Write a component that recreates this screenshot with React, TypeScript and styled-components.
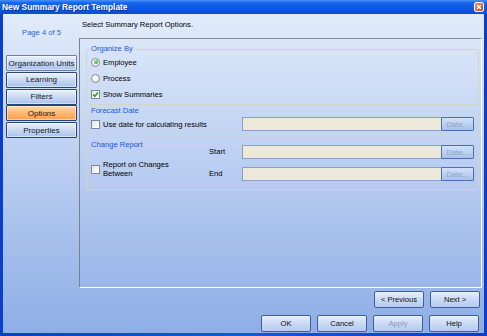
import React from 'react';
import styled, { createGlobalStyle } from 'styled-components';

const GlobalStyle = createGlobalStyle`
  html, body {
    margin: 0;
    padding: 0;
    background: #ffffff;
  }
  body {
    font-family: 'Liberation Sans', Arial, sans-serif;
  }
`;

const Window = styled.div`
  width: 487px;
  height: 336px;
  display: flex;
  flex-direction: column;
  box-sizing: border-box;
  background: linear-gradient(to right, #0a3fc8, #1656e0 50%, #0a3fc8);
  font-family: 'Liberation Sans', Arial, sans-serif;
  font-size: 7.6px;
  color: #000;
  overflow: hidden;
`;

const TitleBar = styled.div`
  height: 14px;
  flex: none;
  display: flex;
  align-items: center;
  justify-content: space-between;
  padding: 0 3px 0 2px;
  background: linear-gradient(#4b93f8 0%, #1665ec 20%, #0a58e4 60%, #0a4ed8 100%);
`;

const Title = styled.span`
  color: #ffffff;
  font-weight: bold;
  font-size: 8.4px;
  line-height: 14px;
  text-shadow: 1px 1px 0 #0a2f9a;
`;

const CloseButton = styled.div`
  width: 10px;
  height: 10px;
  box-sizing: border-box;
  border: 1px solid #ffffff;
  border-radius: 2px;
  background: linear-gradient(135deg, #f08a6c, #d8431f);
  display: flex;
  align-items: center;
  justify-content: center;
`;

const Body = styled.div`
  flex: 1;
  margin: 0 3px 3px 3px;
  display: grid;
  grid-template-columns: 76px 1fr;
  background: linear-gradient(#e1ebfa, #8eaee6);
`;

const Sidebar = styled.div`
  display: flex;
  flex-direction: column;
  padding: 14px 2px 0 3px;
`;

const PageLabel = styled.div`
  height: 10px;
  line-height: 10px;
  text-align: center;
  color: #2a64cc;
  margin-bottom: 17px;
`;

const NavList = styled.div`
  display: flex;
  flex-direction: column;
  gap: 0.75px;
`;

const NavButton = styled.div<{ active?: boolean; focused?: boolean }>`
  height: 16px;
  box-sizing: border-box;
  display: flex;
  align-items: center;
  justify-content: center;
  font-size: 8px;
  color: #1a1a1a;
  border: 1px solid ${({ focused }) => (focused ? '#6f7f9c' : '#26457f')};
  border-radius: 1px;
  background: ${({ active }) =>
    active
      ? 'linear-gradient(#ffdcab, #ffb56e 55%, #ff9c46)'
      : 'linear-gradient(#eaf1fc, #c8d9f4 50%, #a9c2ec)'};
  box-shadow: inset 0 0 0 1px
    ${({ active }) => (active ? 'rgba(255,240,220,0.6)' : 'rgba(255,255,255,0.5)')};
`;

const Main = styled.div`
  display: flex;
  flex-direction: column;
  min-width: 0;
`;

const Header = styled.div`
  height: 24px;
  box-sizing: border-box;
  padding: 6px 0 0 3px;
  line-height: 10px;
`;

const Panel = styled.div`
  height: 250px;
  box-sizing: border-box;
  margin-right: 2px;
  border-left: 1px solid #7d8088;
  border-top: 1px solid #8a8c92;
  border-right: 1px solid #ffffff;
  border-bottom: 1px solid #ffffff;
  padding: 5px 2px 0 6px;
  display: flex;
  flex-direction: column;
`;

const Group = styled.fieldset<{ gapTop?: number; padBottom?: number }>`
  margin: ${({ gapTop }) => gapTop ?? 0}px 0 0 0;
  padding: 0 0 ${({ padBottom }) => padBottom ?? 2}px 4px;
  border: 1px solid #d3d5c9;
  border-radius: 3px;
  min-width: 0;
`;

const Legend = styled.legend`
  padding: 0 1px;
  margin-left: -1px;
  line-height: 10px;
  color: #1a56d6;
`;

const OptionRow = styled.div`
  height: 16px;
  display: flex;
  align-items: center;
  gap: 3px;
`;

const RadioCircle = styled.span<{ checked?: boolean }>`
  width: 9px;
  height: 9px;
  box-sizing: border-box;
  border-radius: 50%;
  border: 1px solid #7f8a98;
  background: radial-gradient(circle at 35% 35%, #ffffff, #e4e4de);
  display: flex;
  align-items: center;
  justify-content: center;
  flex: none;
  &::after {
    content: '';
    display: ${({ checked }) => (checked ? 'block' : 'none')};
    width: 4px;
    height: 4px;
    border-radius: 50%;
    background: radial-gradient(circle at 35% 35%, #7ee07e, #21a121);
  }
`;

const CheckBox = styled.span`
  width: 9px;
  height: 9px;
  box-sizing: border-box;
  border: 1px solid #7d8899;
  background: linear-gradient(135deg, #e6e6df, #ffffff);
  display: flex;
  align-items: center;
  justify-content: center;
  flex: none;
`;

const FieldGrid = styled.div<{ shiftUp?: number }>`
  display: grid;
  grid-template-columns: 118px 33px 200px 32px;
  grid-auto-rows: 16px;
  row-gap: 6px;
  align-items: center;
  margin-top: ${({ shiftUp }) => (shiftUp ? -shiftUp : 0)}px;
`;

const SideLabel = styled.div`
  line-height: 10px;
`;

const CheckCell = styled.div<{ span?: number }>`
  grid-column: 1 / span ${({ span }) => span ?? 1};
  display: flex;
  align-items: center;
  gap: 3px;
`;

const StackCell = styled(CheckCell)`
  grid-row: 1 / span 2;
  align-self: end;
  margin-bottom: 4px;
`;

const WrapLabel = styled.span`
  max-width: 76px;
  line-height: 9px;
`;

const DateField = styled.div`
  height: 14px;
  box-sizing: border-box;
  border: 1px solid #8aa0c3;
  background: #ece9da;
`;

const DateButton = styled.div`
  height: 14px;
  box-sizing: border-box;
  margin-left: -1px;
  border: 1px solid #4a70ae;
  border-radius: 1px;
  background: linear-gradient(#d3e1f7, #a8c1ea);
  color: #8da2c6;
  display: flex;
  align-items: center;
  justify-content: center;
`;

const ButtonRow = styled.div<{ top: number; right: number }>`
  display: flex;
  justify-content: flex-end;
  gap: 6px;
  margin-top: ${({ top }) => top}px;
  padding-right: ${({ right }) => right}px;
`;

const DialogButton = styled.div<{ disabled?: boolean }>`
  width: 50px;
  height: 17px;
  box-sizing: border-box;
  border: 1px solid #3d5f9e;
  border-radius: 2px;
  background: linear-gradient(#e8effc, #c9daf5 50%, #b6cbef);
  color: ${({ disabled }) => (disabled ? '#8c9dbb' : '#111')};
  display: flex;
  align-items: center;
  justify-content: center;
`;

const Check = () => (
  <svg width="7" height="7" viewBox="0 0 7 7">
    <polyline points="1,3.5 2.8,5.3 6,1.6" fill="none" stroke="#21a121" strokeWidth="1.5" />
  </svg>
);

const CloseX = () => (
  <svg width="6" height="6" viewBox="0 0 6 6">
    <path d="M1 1 L5 5 M5 1 L1 5" stroke="#ffffff" strokeWidth="1.4" />
  </svg>
);

const navItems = ['Organization Units', 'Learning', 'Filters', 'Options', 'Properties'];

export default function App() {
  return (
    <>
      <GlobalStyle />
      <Window>
        <TitleBar>
          <Title>New Summary Report Template</Title>
          <CloseButton>
            <CloseX />
          </CloseButton>
        </TitleBar>
        <Body>
          <Sidebar>
            <PageLabel>Page 4 of 5</PageLabel>
            <NavList>
              {navItems.map((item) => (
                <NavButton key={item} active={item === 'Options'} focused={item === 'Organization Units'}>
                  {item}
                </NavButton>
              ))}
            </NavList>
          </Sidebar>
          <Main>
            <Header>Select Summary Report Options.</Header>
            <Panel>
              <Group>
                <Legend>Organize By</Legend>
                <OptionRow>
                  <RadioCircle checked />
                  Employee
                </OptionRow>
                <OptionRow>
                  <RadioCircle />
                  Process
                </OptionRow>
                <OptionRow>
                  <CheckBox>
                    <Check />
                  </CheckBox>
                  Show Summaries
                </OptionRow>
              </Group>
              <Group gapTop={1} padBottom={7}>
                <Legend>Forecast Date</Legend>
                <FieldGrid>
                  <CheckCell span={2}>
                    <CheckBox />
                    Use date for calculating results
                  </CheckCell>
                  <DateField />
                  <DateButton>Date...</DateButton>
                </FieldGrid>
              </Group>
              <Group gapTop={0} padBottom={7}>
                <Legend>Change Report</Legend>
                <FieldGrid shiftUp={6}>
                  <StackCell>
                    <CheckBox />
                    <WrapLabel>Report on Changes Between</WrapLabel>
                  </StackCell>
                  <SideLabel>Start</SideLabel>
                  <DateField />
                  <DateButton>Date...</DateButton>
                  <SideLabel>End</SideLabel>
                  <DateField />
                  <DateButton>Date...</DateButton>
                </FieldGrid>
              </Group>
            </Panel>
            <ButtonRow top={3} right={4}>
              <DialogButton>&lt; Previous</DialogButton>
              <DialogButton>Next &gt;</DialogButton>
            </ButtonRow>
            <ButtonRow top={7} right={5}>
              <DialogButton>OK</DialogButton>
              <DialogButton>Cancel</DialogButton>
              <DialogButton disabled>Apply</DialogButton>
              <DialogButton>Help</DialogButton>
            </ButtonRow>
          </Main>
        </Body>
      </Window>
    </>
  );
}
